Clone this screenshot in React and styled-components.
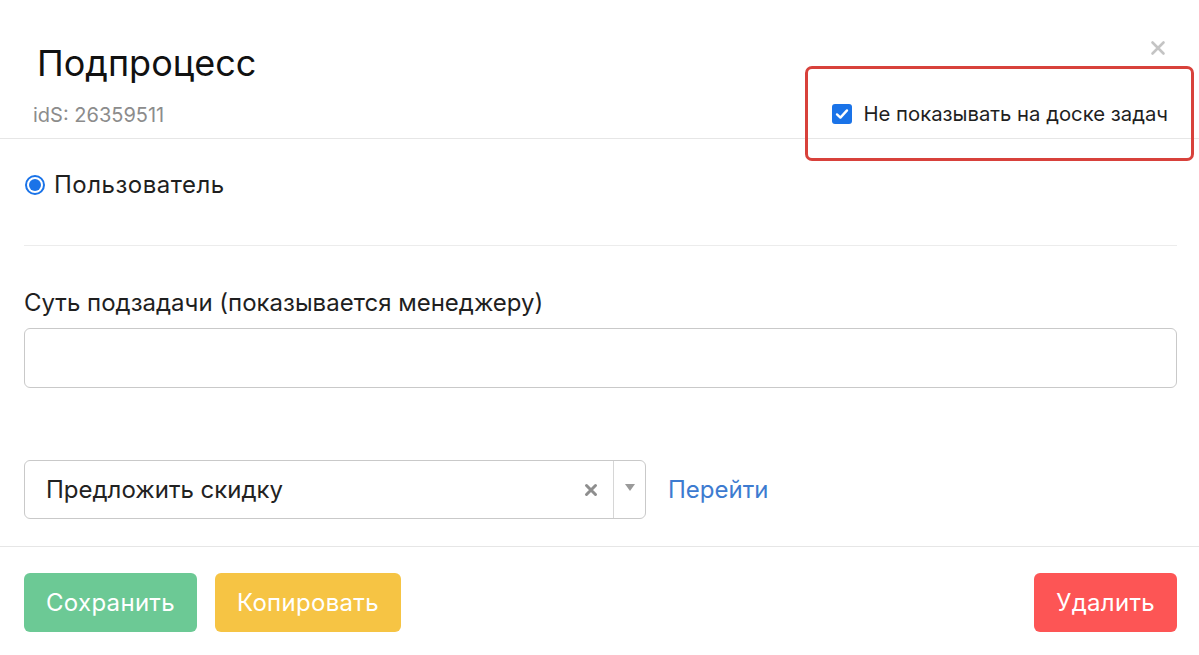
import React from 'react'
import styled, { createGlobalStyle } from 'styled-components'

const GlobalStyle = createGlobalStyle`
  html, body {
    margin: 0;
    padding: 0;
    background: #fff;
  }
  body {
    font-family: Inter, "Noto Sans", "Liberation Sans", sans-serif;
    color: #1f1f1f;
  }
`

const Modal = styled.div`
  width: 1199px;
  height: 655px;
  background: #fff;
  overflow: hidden;
`

const Header = styled.header`
  height: 139px;
  box-sizing: border-box;
  border-bottom: 1px solid #e6e6e6;
  display: flex;
  justify-content: space-between;
  padding: 0 22px 0 33px;
`

const TitleBlock = styled.div`
  padding-top: 41px;
`

const Title = styled.h1`
  margin: 0 0 0 4px;
  font-size: 36px;
  line-height: 44px;
  font-weight: 400;
  color: #111;
`

const SubId = styled.div`
  margin-top: 18px;
  font-size: 20px;
  line-height: 24px;
  color: #8c8c8c;
`

const RightBlock = styled.div`
  display: flex;
  flex-direction: column;
  align-items: flex-end;
  padding-top: 40px;
`

const Close = styled.button`
  border: 0;
  background: none;
  padding: 0;
  margin-right: 11px;
  width: 16px;
  height: 16px;
  cursor: pointer;
  display: flex;
`

const CheckArea = styled.div`
  position: relative;
  margin-top: 46px;
  margin-right: 9px;
  display: flex;
  align-items: center;
  gap: 11px;
`

const Highlight = styled.div`
  position: absolute;
  left: -27px;
  top: -36px;
  right: -26px;
  bottom: -35px;
  border: 3px solid #d8413b;
  border-radius: 7px;
  pointer-events: none;
`

const CheckBox = styled.span`
  width: 20px;
  height: 20px;
  border-radius: 3px;
  background: #1a73e8;
  display: flex;
  align-items: center;
  justify-content: center;
`

const CheckLabel = styled.span`
  font-size: 20.3px;
  line-height: 24px;
  color: #1f1f1f;
`

const Body = styled.main`
  padding: 0 22px 0 24px;
`

const RadioRow = styled.label`
  display: flex;
  align-items: flex-start;
  gap: 9px;
  height: 107px;
  box-sizing: border-box;
  border-bottom: 1px solid #ececec;
  padding-top: 34px;
`

const Radio = styled.span`
  width: 20px;
  height: 20px;
  margin-left: 1px;
  margin-top: 2px;
  box-sizing: border-box;
  border-radius: 50%;
  border: 2px solid #1a73e8;
  display: flex;
  align-items: center;
  justify-content: center;
  &::after {
    content: '';
    width: 12px;
    height: 12px;
    border-radius: 50%;
    background: #1a73e8;
  }
`

const Text = styled.span`
  font-size: 24px;
  line-height: 24px;
  letter-spacing: 0.5px;
  color: #1f1f1f;
`

const FieldLabel = styled.div`
  margin-top: 45px;
  font-size: 24px;
  line-height: 24px;
  color: #1f1f1f;
`

const Input = styled.input`
  display: block;
  width: 100%;
  box-sizing: border-box;
  height: 60px;
  margin-top: 13px;
  border: 1px solid #c9c9c9;
  border-radius: 6px;
  outline: none;
  font: inherit;
`

const SelectRow = styled.div`
  margin-top: 72px;
  display: flex;
  align-items: center;
  gap: 22px;
  padding-bottom: 27px;
`

const Select = styled.div`
  width: 622px;
  height: 59px;
  box-sizing: border-box;
  border: 1px solid #c9c9c9;
  border-radius: 6px;
  display: flex;
  align-items: center;
`

const SelectValue = styled.div`
  flex: 1;
  padding-left: 21px;
  font-size: 24px;
  line-height: 24px;
  color: #222;
`

const ClearBtn = styled.span`
  width: 44px;
  display: flex;
  justify-content: center;
  padding-left: 2px;
`

const ArrowBox = styled.span`
  width: 32px;
  align-self: stretch;
  border-left: 1px solid #d6d6d6;
  display: flex;
  align-items: center;
  justify-content: center;
  padding-bottom: 4px;
  box-sizing: border-box;
`

const LinkText = styled.a`
  font-size: 24px;
  line-height: 24px;
  color: #3d7bd0;
  text-decoration: none;
`

const Footer = styled.footer`
  border-top: 1px solid #e6e6e6;
  display: flex;
  align-items: flex-start;
  padding: 26px 22px 0 24px;
  gap: 18px;
`

const Btn = styled.button`
  height: 59px;
  padding: 0 22px;
  border: 0;
  border-radius: 6px;
  background: ${p => p.$bg};
  color: #fff;
  font-family: inherit;
  font-size: 24px;
  letter-spacing: 0.3px;
  cursor: pointer;
  margin-left: ${p => (p.$push ? 'auto' : '0')};
`

export default function App() {
  return (
    <>
      <GlobalStyle />
      <Modal>
        <Header>
          <TitleBlock>
            <Title>Подпроцесс</Title>
            <SubId>idS: 26359511</SubId>
          </TitleBlock>
          <RightBlock>
            <Close aria-label="close">
              <svg width="16" height="16" viewBox="0 0 16 16">
                <path d="M2.5 2.5 L13.5 13.5 M13.5 2.5 L2.5 13.5" stroke="#c4c4c4" strokeWidth="2.6" strokeLinecap="round" />
              </svg>
            </Close>
            <CheckArea>
              <Highlight />
              <CheckBox>
                <svg width="14" height="14" viewBox="0 0 14 14">
                  <path d="M2 7.4 L5.4 10.6 L12 3.4" fill="none" stroke="#fff" strokeWidth="2.4" strokeLinecap="round" strokeLinejoin="round" />
                </svg>
              </CheckBox>
              <CheckLabel>Не показывать на доске задач</CheckLabel>
            </CheckArea>
          </RightBlock>
        </Header>
        <Body>
          <RadioRow>
            <Radio />
            <Text>Пользователь</Text>
          </RadioRow>
          <FieldLabel>Суть подзадачи (показывается менеджеру)</FieldLabel>
          <Input />
          <SelectRow>
            <Select>
              <SelectValue>Предложить скидку</SelectValue>
              <ClearBtn>
                <svg width="14" height="14" viewBox="0 0 14 14">
                  <path d="M2.5 2.5 L11.5 11.5 M11.5 2.5 L2.5 11.5" stroke="#8e8e8e" strokeWidth="3" strokeLinecap="round" />
                </svg>
              </ClearBtn>
              <ArrowBox>
                <svg width="10" height="7" viewBox="0 0 10 7">
                  <path d="M0 0 H10 L5 7 Z" fill="#9a9a9a" />
                </svg>
              </ArrowBox>
            </Select>
            <LinkText href="#">Перейти</LinkText>
          </SelectRow>
        </Body>
        <Footer>
          <Btn $bg="#6cc995">Сохранить</Btn>
          <Btn $bg="#f6c444">Копировать</Btn>
          <Btn $bg="#fd5555" $push>Удалить</Btn>
        </Footer>
      </Modal>
    </>
  )
}
